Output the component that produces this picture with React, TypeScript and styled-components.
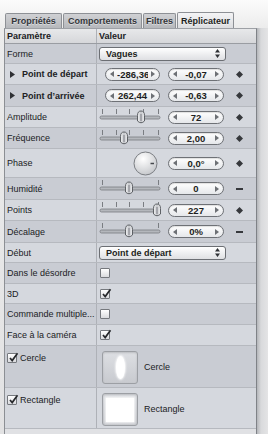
import React from "react";
import styled, { createGlobalStyle } from "styled-components";

const GlobalStyle = createGlobalStyle`
  html, body {
    margin: 0;
    padding: 0;
  }
  body {
    width: 268px;
    height: 434px;
    overflow: hidden;
    background: #e6e6e6;
    font-family: "Liberation Sans", Arial, sans-serif;
  }
`;

const Window = styled.div`
  width: 268px;
  height: 434px;
  display: flex;
  flex-direction: column;
  overflow: hidden;
  font-size: 9px;
  color: #202124;
  background: linear-gradient(#fbfbfb, #ececec 28px, #e2e2e3);
`;

const TabBar = styled.div`
  height: 28px;
  box-sizing: border-box;
  display: flex;
  align-items: flex-end;
  gap: 1px;
  padding-left: 5px;
`;

const Tab = styled.div<{ $active?: boolean; $w: number }>`
  width: ${(p) => p.$w}px;
  height: ${(p) => (p.$active ? 16 : 15)}px;
  box-sizing: border-box;
  display: flex;
  align-items: center;
  justify-content: center;
  font-weight: bold;
  white-space: nowrap;
  color: ${(p) => (p.$active ? "#1e1f22" : "#35373b")};
  border: 1px solid #8d9095;
  border-bottom: none;
  border-radius: 2px 2px 0 0;
  background: ${(p) =>
    p.$active
      ? "linear-gradient(#f4f4f5, #dcdde0)"
      : "linear-gradient(#d0d1d4, #b6b8bc)"};
  text-shadow: 0 1px 0 rgba(255, 255, 255, 0.45);
`;

const Body = styled.div`
  flex: 1;
  display: flex;
  min-height: 0;
`;

const Panel = styled.div`
  margin-left: 4px;
  width: 253px;
  box-sizing: border-box;
  border-left: 1px solid #8c8f94;
  border-right: 1px solid #7f8287;
  border-top: 1px solid #9da0a5;
  display: flex;
  flex-direction: column;
  background: #dfe0e3;
`;

const RightEdge = styled.div`
  flex: 1;
  background: linear-gradient(to right, #b4b6ba, #d9dadc 4px, #e4e4e5);
`;

const Line = styled.div<{ $h: number; $dark?: boolean; $header?: boolean }>`
  height: ${(p) => p.$h}px;
  box-sizing: border-box;
  display: flex;
  border-bottom: 1px solid ${(p) => (p.$header ? "#9a9da2" : "#b6b9bf")};
  background: ${(p) =>
    p.$header
      ? "linear-gradient(#e7e8ea, #d6d7da)"
      : p.$dark
      ? "#c9ccd3"
      : "#d5d8de"};
`;

const NameCell = styled.div<{ $top?: boolean; $bold?: boolean }>`
  width: 92px;
  flex: none;
  box-sizing: border-box;
  border-right: 1px solid #aeb1b7;
  padding: ${(p) => (p.$top ? "7px 0 0 2px" : "0 0 0 2px")};
  display: flex;
  align-items: ${(p) => (p.$top ? "flex-start" : "center")};
  gap: 3px;
  font-weight: ${(p) => (p.$bold ? "bold" : "normal")};
  white-space: nowrap;
  overflow: hidden;
`;

const ValueCell = styled.div<{ $top?: boolean; $bold?: boolean }>`
  flex: 1;
  display: flex;
  align-items: ${(p) => (p.$top ? "flex-start" : "center")};
  padding: ${(p) => (p.$top ? "5px 0 0 2px" : "0 0 0 2px")};
  font-weight: ${(p) => (p.$bold ? "bold" : "normal")};
`;

const Control = styled.div<{ $justify?: string; $pad?: number }>`
  width: 69px;
  flex: none;
  box-sizing: border-box;
  display: flex;
  align-items: center;
  justify-content: ${(p) => p.$justify ?? "flex-start"};
  padding: ${(p) =>
    p.$justify === "flex-end" ? `0 ${p.$pad ?? 8}px 0 0` : `0 0 0 ${p.$pad ?? 0}px`};
`;

const Disclosure = styled.span`
  margin-left: 3px;
  margin-right: 4px;
  display: flex;
`;

const FieldBox = styled.div<{ $w: number }>`
  width: ${(p) => p.$w}px;
  height: 13px;
  flex: none;
  box-sizing: border-box;
  border: 1px solid #6e7176;
  border-radius: 7px;
  background: linear-gradient(#ffffff, #e5e7ea);
  box-shadow: inset 0 1px 1px rgba(0, 0, 0, 0.12);
  display: flex;
  align-items: center;
  gap: 3px;
  padding: 0 4px;
`;

const FieldText = styled.span`
  flex: 1;
  min-width: 0;
  overflow: hidden;
  white-space: nowrap;
  text-align: center;
  font-weight: bold;
  font-size: 9.5px;
  line-height: 11px;
  color: #1d1e21;
`;

const KeyArea = styled.div`
  width: 30px;
  display: flex;
  justify-content: center;
  align-items: center;
`;

const PopupBox = styled.div`
  width: 127px;
  height: 14px;
  box-sizing: border-box;
  border: 1px solid #6c6f74;
  border-radius: 3px;
  background: linear-gradient(#ffffff, #ebecee 60%, #dfe0e3);
  display: flex;
  align-items: center;
  justify-content: space-between;
  padding: 0 5px 0 6px;
  font-weight: bold;
  color: #1d1e21;
`;

const Box = styled.div`
  width: 10px;
  height: 10px;
  flex: none;
  box-sizing: border-box;
  border: 1px solid #75787d;
  border-radius: 1px;
  background: linear-gradient(#ffffff, #dadbde);
  position: relative;
`;

const Tick = styled.svg`
  position: absolute;
  left: 0;
  top: -2px;
`;

const ValueBox = styled(Box)`
  margin-left: 1px;
`;

const Well = styled.div`
  width: 36px;
  height: 33px;
  flex: none;
  box-sizing: border-box;
  margin-left: 3px;
  border: 1px solid #9c9fa4;
  border-radius: 3px;
  background: linear-gradient(#dddfe3, #c8cacf);
  box-shadow: inset 0 1px 2px rgba(0, 0, 0, 0.15);
  display: flex;
  align-items: center;
  justify-content: center;
`;

const Ellipse = styled.div`
  width: 9px;
  height: 23px;
  border-radius: 50%;
  background: #ffffff;
  box-shadow: 0 0 2px 1px rgba(255, 255, 255, 0.8);
`;

const WhiteRect = styled.div`
  width: 28px;
  height: 24px;
  background: #ffffff;
  box-shadow: 0 0 2px 1px rgba(255, 255, 255, 0.8);
`;

const WellLabel = styled.span`
  margin-left: 6px;
  align-self: center;
  margin-top: -4px;
`;

const Filler = styled.div`
  flex: 1;
  background: #e0e1e4;
`;

const Arrow = ({ dir }: { dir: "l" | "r" }) => (
  <svg width="4" height="6" viewBox="0 0 4 6">
    <path d={dir === "l" ? "M4 0L0 3L4 6Z" : "M0 0L4 3L0 6Z"} fill="#6d7075" />
  </svg>
);

const Field = ({ w = 56, text }: { w?: number; text: string }) => (
  <FieldBox $w={w}>
    <Arrow dir="l" />
    <FieldText>{text}</FieldText>
    <Arrow dir="r" />
  </FieldBox>
);

const Key = ({ dash }: { dash?: boolean }) => (
  <KeyArea>
    {dash ? (
      <svg width="7" height="2">
        <rect width="7" height="2" fill="#36383c" />
      </svg>
    ) : (
      <svg width="7" height="7" viewBox="0 0 7 7">
        <path d="M3.5 0L7 3.5L3.5 7L0 3.5Z" fill="#36383c" />
      </svg>
    )}
  </KeyArea>
);

const Triangle = () => (
  <Disclosure>
    <svg width="5" height="7" viewBox="0 0 5 7">
      <path d="M0 0L5 3.5L0 7Z" fill="#2e3034" />
    </svg>
  </Disclosure>
);

const Slider = ({ at, ticks }: { at: number; ticks: number[] }) => (
  <svg width="62" height="21" viewBox="0 0 62 21">
    <defs>
      <linearGradient id="knob" x1="0" x2="1" y1="0" y2="0">
        <stop offset="0" stopColor="#f4f5f6" />
        <stop offset="0.5" stopColor="#c3c5c9" />
        <stop offset="1" stopColor="#eeeff1" />
      </linearGradient>
    </defs>
    {ticks.map((x) => (
      <rect key={x} x={x} y={2} width={1} height={5} fill="#7a7d82" />
    ))}
    <rect x="1" y="9" width="60" height="3" rx="1.5" fill="#b4b7bc" stroke="#787b80" strokeWidth="0.8" />
    <path
      d={`M${at - 3.5} 8.5 Q${at - 3.5} 4 ${at} 4 Q${at + 3.5} 4 ${at + 3.5} 8.5 L${at + 3.5} 14 Q${at} 17.5 ${at - 3.5} 14 Z`}
      fill="url(#knob)"
      stroke="#505358"
      strokeWidth="0.9"
    />
    <rect x={at - 0.6} y="7" width="1.2" height="7" fill="#8b8e93" />
  </svg>
);

const Dial = () => (
  <svg width="25" height="25" viewBox="0 0 25 25">
    <defs>
      <radialGradient id="dial" cx="40%" cy="30%" r="75%">
        <stop offset="0" stopColor="#ffffff" />
        <stop offset="1" stopColor="#c3c5c9" />
      </radialGradient>
    </defs>
    <circle cx="12.5" cy="12.5" r="11.5" fill="url(#dial)" stroke="#7b7e83" />
    <line x1="17.5" y1="12.5" x2="21" y2="12.5" stroke="#45484d" strokeWidth="1.5" />
  </svg>
);

const Popup = ({ label }: { label: string }) => (
  <PopupBox>
    <span>{label}</span>
    <svg width="5" height="9" viewBox="0 0 5 9">
      <path d="M0 3.5L2.5 0L5 3.5ZM0 5.5L2.5 9L5 5.5Z" fill="#2f3135" />
    </svg>
  </PopupBox>
);

const Check = ({ on, value }: { on?: boolean; value?: boolean }) => {
  const Frame = value ? ValueBox : Box;
  return (
    <Frame>
      {on && (
        <Tick width="11" height="11" viewBox="0 0 11 11">
          <path d="M2 6L4.2 8.6L9.5 1.2" fill="none" stroke="#26282b" strokeWidth="1.7" />
        </Tick>
      )}
    </Frame>
  );
};

const five = [3, 17, 30, 44, 59];
const two = [3, 59];

type Row = {
  h: number;
  name: React.ReactNode;
  value: React.ReactNode;
  bold?: boolean;
  tall?: boolean;
};

const rows: Row[] = [
  { h: 20, name: "Forme", value: <Popup label="Vagues" /> },
  {
    h: 21,
    bold: true,
    name: (
      <>
        <Triangle />
        Point de départ
      </>
    ),
    value: (
      <>
        <Control $justify="flex-end">
          <Field w={55} text="-286,36" />
        </Control>
        <Field text="-0,07" />
        <Key />
      </>
    ),
  },
  {
    h: 22,
    bold: true,
    name: (
      <>
        <Triangle />
        Point d’arrivée
      </>
    ),
    value: (
      <>
        <Control $justify="flex-end">
          <Field w={55} text="262,44" />
        </Control>
        <Field text="-0,63" />
        <Key />
      </>
    ),
  },
  {
    h: 21,
    name: "Amplitude",
    value: (
      <>
        <Control>
          <Slider at={42} ticks={five} />
        </Control>
        <Field text="72" />
        <Key />
      </>
    ),
  },
  {
    h: 21,
    name: "Fréquence",
    value: (
      <>
        <Control>
          <Slider at={25} ticks={five} />
        </Control>
        <Field text="2,00" />
        <Key />
      </>
    ),
  },
  {
    h: 29,
    name: "Phase",
    value: (
      <>
        <Control $pad={34}>
          <Dial />
        </Control>
        <Field text="0,0°" />
        <Key />
      </>
    ),
  },
  {
    h: 22,
    name: "Humidité",
    value: (
      <>
        <Control>
          <Slider at={30} ticks={two} />
        </Control>
        <Field text="0" />
        <Key dash />
      </>
    ),
  },
  {
    h: 21,
    name: "Points",
    value: (
      <>
        <Control>
          <Slider at={58} ticks={five} />
        </Control>
        <Field text="227" />
        <Key />
      </>
    ),
  },
  {
    h: 22,
    name: "Décalage",
    value: (
      <>
        <Control>
          <Slider at={30} ticks={two} />
        </Control>
        <Field text="0%" />
        <Key dash />
      </>
    ),
  },
  { h: 20, name: "Début", value: <Popup label="Point de départ" /> },
  { h: 21, name: "Dans le désordre", value: <Check value /> },
  { h: 20, name: "3D", value: <Check value on /> },
  { h: 21, name: "Commande multiple...", value: <Check value /> },
  { h: 21, name: "Face à la caméra", value: <Check value on /> },
  {
    h: 42,
    tall: true,
    name: (
      <>
        <Check on />
        Cercle
      </>
    ),
    value: (
      <>
        <Well>
          <Ellipse />
        </Well>
        <WellLabel>Cercle</WellLabel>
      </>
    ),
  },
  {
    h: 41,
    tall: true,
    name: (
      <>
        <Check on />
        Rectangle
      </>
    ),
    value: (
      <>
        <Well>
          <WhiteRect />
        </Well>
        <WellLabel>Rectangle</WellLabel>
      </>
    ),
  },
];

const tabs = [
  { label: "Propriétés", w: 57 },
  { label: "Comportements", w: 79 },
  { label: "Filtres", w: 33 },
  { label: "Réplicateur", w: 57, active: true },
];

export default function App() {
  return (
    <>
      <GlobalStyle />
      <Window>
        <TabBar>
          {tabs.map((t) => (
            <Tab key={t.label} $w={t.w} $active={t.active}>
              {t.label}
            </Tab>
          ))}
        </TabBar>
        <Body>
          <Panel>
            <Line $h={15} $header>
              <NameCell $bold>Paramètre</NameCell>
              <ValueCell $bold>Valeur</ValueCell>
            </Line>
            {rows.map((r, i) => (
              <Line key={i} $h={r.h} $dark={i % 2 === 0}>
                <NameCell $top={r.tall} $bold={r.bold}>
                  {r.name}
                </NameCell>
                <ValueCell $top={r.tall}>{r.value}</ValueCell>
              </Line>
            ))}
            <Filler />
          </Panel>
          <RightEdge />
        </Body>
      </Window>
    </>
  );
}
